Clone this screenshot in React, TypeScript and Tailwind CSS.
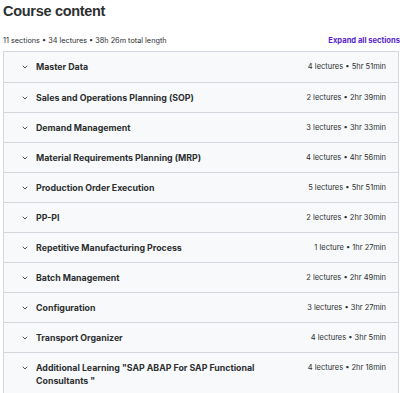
const sections = [
  { title: "Master Data", info: "4 lectures • 5hr 51min" },
  { title: "Sales and Operations Planning (SOP)", info: "2 lectures • 2hr 39min" },
  { title: "Demand Management", info: "3 lectures • 3hr 33min" },
  { title: "Material Requirements Planning (MRP)", info: "4 lectures • 4hr 56min" },
  { title: "Production Order Execution", info: "5 lectures • 5hr 51min" },
  { title: "PP-PI", info: "2 lectures • 2hr 30min" },
  { title: "Repetitive Manufacturing Process", info: "1 lecture • 1hr 27min" },
  { title: "Batch Management", info: "2 lectures • 2hr 49min" },
  { title: "Configuration", info: "3 lectures • 3hr 27min" },
  { title: "Transport Organizer", info: "4 lectures • 3hr 5min" },
  {
    title: 'Additional Learning "SAP ABAP For SAP Functional Consultants "',
    info: "4 lectures • 2hr 18min",
  },
];

function Chevron() {
  return (
    <svg className="h-[8px] w-[8px] shrink-0 text-[#2d2f31]" viewBox="0 0 24 24" fill="none" stroke="currentColor" strokeWidth="2.5" strokeLinecap="round" strokeLinejoin="round">
      <path d="M6 9l6 6 6-6" />
    </svg>
  );
}

export default function App() {
  return (
    <div className="w-[400px] h-[393px] overflow-hidden bg-white pl-[3px] text-[#2d2f31] font-['Inter',sans-serif]">
      <h2 className="pt-[2px] text-[14.5px] leading-[18px] font-bold tracking-[-0.3px] font-['Liberation_Sans',Arial,sans-serif]">Course content</h2>

      <div className="mt-[15px] flex items-center justify-between h-[12px]">
        <span className="text-[7.3px] text-[#2d2f31]">11 sections • 34 lectures • 38h 26m total length</span>
        <button className="text-[7.6px] font-bold text-[#5624d0] whitespace-nowrap">Expand all sections</button>
      </div>

      <div className="mt-[4px] w-[396px] border border-[#d1d7dc]">
        {sections.map((s, i) => (
          <div
            key={i}
            className={
              "flex items-start justify-between bg-[#f7f9fa] pl-[17px] pr-[12px] " +
              (i > 0 ? "border-t border-[#d1d7dc] " : "") +
              (i === sections.length - 1 ? "pt-[8px] pb-[6px]" : "h-[30px] pt-[8px]")
            }
          >
            <div className="flex items-start gap-[7px] min-w-0">
              <div className="h-[13px] flex items-center">
                <Chevron />
              </div>
              <span className="max-w-[250px] text-[8.8px] leading-[13px] font-bold">{s.title}</span>
            </div>
            <span className="shrink-0 text-[7.5px] leading-[13px] text-[#2d2f31]">{s.info}</span>
          </div>
        ))}
      </div>
    </div>
  );
}
